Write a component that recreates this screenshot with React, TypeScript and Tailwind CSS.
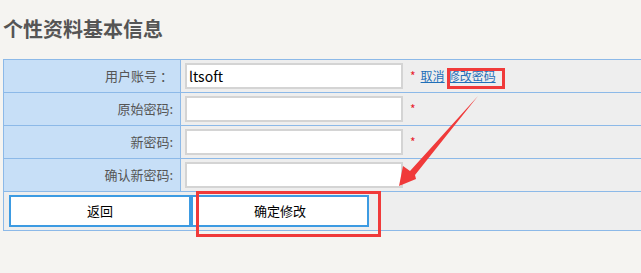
import React from 'react';

const font = { fontFamily: '"Noto Sans CJK SC", "Microsoft YaHei", sans-serif' };

const Row: React.FC<{ label: string; value?: string; star?: boolean; extra?: React.ReactNode }> = ({ label, value, star, extra }) => (
    <div className="flex h-[33px] border-b border-[#8cb9e8]">
        <div className="w-[177px] shrink-0 border-r border-[#8cb9e8] bg-[#c7dff7] pr-[7px] flex items-center justify-end text-[13px] text-[#555]">
            {label}
        </div>
        <div className="flex-1 bg-[#eeeeee] flex items-center pl-[4px]">
            <div className="w-[218px] h-[26px] border-2 border-[#d4d4d4] bg-white flex items-center pl-[2px] text-[14px] text-black">
                {value}
            </div>
            {star && <span className="ml-[7px] text-[12px] text-[#e8212b] leading-none">*</span>}
            {extra}
        </div>
    </div>
);

const App: React.FC = () => {
    return (
        <div className="relative w-[641px] h-[273px] overflow-hidden bg-[#f5f4f1]" style={font}>
            <h2 className="pt-[18px] pl-[3px] text-[20px] leading-[22px] font-bold text-[#555]">个性资料基本信息</h2>

            <div className="mt-[19px] ml-[3px] w-[640px] border border-[#8cb9e8]">
                <Row
                    label="用户账号 ："
                    value="ltsoft"
                    star
                    extra={
                        <span className="ml-[5px] text-[12px] text-[#1f6fb8] underline">
                            取消<span className="ml-[3px]">修改密码</span>
                        </span>
                    }
                />
                <Row label="原始密码:" star />
                <Row label="新密码:" star />
                <Row label="确认新密码:" />
                <div className="flex h-[38px] bg-[#eeeeee] pt-[3px] pl-[5px]">
                    <button className="w-[182px] h-[32px] border-2 border-[#3d9be2] bg-white text-[13px] text-black">返回</button>
                    <button className="w-[178px] h-[32px] border-2 border-[#3d9be2] bg-white text-[13px] text-black">确定修改</button>
                </div>
            </div>

            {/* annotations */}
            <div className="absolute left-[447px] top-[68px] w-[58px] h-[21px] border-[3px] border-[#f03a3a]" />
            <div className="absolute left-[196px] top-[191px] w-[185px] h-[46px] border-[3px] border-[#f03a3a]" />
            <svg className="absolute left-0 top-0" width="641" height="273">
                <polygon points="399,186 403,166 410,171 478,96 415,175 416,179" fill="#f03a3a" />
            </svg>
        </div>
    );
};

export default App;
